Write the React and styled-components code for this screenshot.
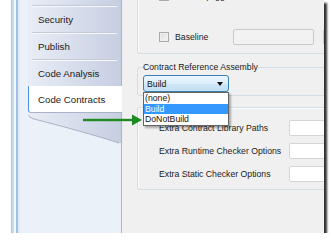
import React from "react";
import styled, { createGlobalStyle } from "styled-components";

const Global = createGlobalStyle`
  html, body { margin: 0; padding: 0; background: #fff; }
  body { font-family: "Liberation Sans", Arial, sans-serif; }
  * { box-sizing: border-box; }
`;

const Window = styled.div`
  position: relative;
  width: 324px;
  height: 233px;
  display: flex;
  overflow: hidden;
  background: #f0f0f0;
  box-shadow: 3px 3px 2px rgba(0, 0, 0, 0.8);
`;

const LeftFrame = styled.div`
  flex: none;
  width: 20px;
  background: linear-gradient(
    to right,
    #ffffff 0 11px,
    #b8c2cf 11px 12px,
    #c4dbf0 12px 14px,
    #f4f8fc 14px 16px,
    #9dc2e5 16px 18px,
    #e4ebf5 18px 20px
  );
`;

const TabPanel = styled.div`
  flex: none;
  width: 102px;
  display: flex;
  flex-direction: column;
  padding-left: 8px;
  background: #ebf1f9;
  border-right: 1px solid #aab5cc;
`;

const TabColumn = styled.div`
  display: flex;
  flex-direction: column;
  padding-top: 5px;
  background: linear-gradient(to right, #e8edf6, #c6cee1);
`;

const Tab = styled.div`
  position: relative;
  height: 27px;
  display: flex;
  align-items: center;
  padding-left: 10px;
  padding-top: 1px;
  font-size: 9.7px;
  color: #1a1a1a;
  white-space: nowrap;
  &::before {
    content: "";
    position: absolute;
    left: 4px;
    right: 4px;
    top: 0;
    height: 2px;
    background: linear-gradient(#c3cadb 50%, #f7f9fc 50%);
    display: ${(p) => (p.$active ? "none" : "block")};
  }
  ${(p) =>
    p.$active &&
    `
    background: #ffffff;
    margin-right: -1px;
    border-left: 1px solid #4b95dc;
    padding-left: 9px;
    border-bottom: 1px solid #a9b2c6;
    border-bottom-left-radius: 3px;
  `}
`;

const Footer = styled.svg`
  display: block;
  width: 93px;
  height: 32px;
  margin-top: -1px;
`;

const Content = styled.div`
  position: relative;
  flex: 1;
  display: flex;
  flex-direction: column;
  padding-left: 15px;
  overflow: hidden;
  font-size: 8.7px;
  color: #1a1a1a;
`;

const GroupBox = styled.div`
  flex: none;
  width: 240px;
  height: ${(p) => p.$h}px;
  margin-top: ${(p) => p.$mt}px;
  border: 1px solid #d3dde4;
  border-radius: 3px;
  box-shadow: inset 1px 1px 0 #fafbfc;
  padding-left: 21px;
  padding-top: ${(p) => p.$pt}px;
  display: flex;
  flex-direction: column;
`;

const Fieldset = styled.fieldset`
  flex: none;
  width: 240px;
  margin: 8px 0 0 0;
  padding: 3px 5px 3px 5px;
  border: 1px solid #d3dde4;
  border-radius: 3px;
  min-width: 0;
`;

const Legend = styled.legend`
  padding: 0;
  font-size: 8.7px;
  line-height: 10px;
  color: #1a1a1a;
`;

const Row = styled.div`
  display: flex;
  align-items: center;
  height: ${(p) => p.$h || 16}px;
  margin-top: ${(p) => p.$mt || 0}px;
  white-space: nowrap;
`;

const CheckCell = styled.div`
  display: flex;
  align-items: center;
  gap: 6px;
  width: ${(p) => p.$w || 74}px;
  flex: none;
`;

const Check = styled.span`
  flex: none;
  width: 10px;
  height: 10px;
  border: 1px solid #a9abad;
  background: linear-gradient(135deg, #dcdcdc, #f6f6f6);
  box-shadow: inset 0 0 0 1px #eeeeee;
`;

const TextBox = styled.div`
  flex: none;
  width: ${(p) => p.$w}px;
  height: 16px;
  border: 1px solid ${(p) => (p.$disabled ? "#c9c9c9" : "#d2d6db")};
  border-radius: 2px;
  background: ${(p) => (p.$disabled ? "#f2f2f2" : "#ffffff")};
  margin-left: ${(p) => p.$ml || 0}px;
`;

const Label = styled.span`
  flex: none;
  width: 130px;
`;

const ComboWrap = styled.div`
  position: relative;
  width: 86px;
`;

const Combo = styled.div`
  height: 17px;
  display: flex;
  align-items: center;
  justify-content: space-between;
  padding: 0 5px 0 3px;
  border: 1px solid #3c7fb1;
  border-radius: 3px;
  background: linear-gradient(#edf6fd, #ddeefa 50%, #cfe7f7 50%, #c2dff3);
  color: #111;
`;

const Caret = styled.span`
  width: 0;
  height: 0;
  border-left: 3.5px solid transparent;
  border-right: 3.5px solid transparent;
  border-top: 4px solid #111;
`;

const DropList = styled.div`
  position: absolute;
  left: 0;
  top: 100%;
  width: 86px;
  border: 1px solid #646464;
  background: #fff;
  box-shadow: 2px 2px 2px rgba(0, 0, 0, 0.3);
  z-index: 2;
`;

const Item = styled.div`
  height: 10.5px;
  line-height: 10.5px;
  padding-left: 1px;
  background: ${(p) => (p.$sel ? "#3399ff" : "#fff")};
  color: ${(p) => (p.$sel ? "#fff" : "#111")};
`;

const Arrow = styled.svg`
  position: absolute;
  left: 83px;
  top: 114px;
  width: 60px;
  height: 12px;
  z-index: 3;
`;

const tabs = ["Security", "Publish", "Code Analysis", "Code Contracts"];

export default function App() {
  return (
    <>
      <Global />
      <Window>
        <LeftFrame />
        <TabPanel>
          <TabColumn>
            {tabs.map((t) => (
              <Tab key={t} $active={t === "Code Contracts"}>
                {t}
              </Tab>
            ))}
          </TabColumn>
          <Footer viewBox="0 0 93 32">
            <defs>
              <linearGradient id="tg" x1="0" x2="1" y1="0" y2="0">
                <stop offset="0" stopColor="#e8edf6" />
                <stop offset="1" stopColor="#c6cee1" />
              </linearGradient>
            </defs>
            <path
              d="M0 0 H93 V31 H91 C70 24 30 13 6 7 Q1 5.5 0.5 3 Z"
              fill="url(#tg)"
            />
            <path
              d="M91 31 C70 24 30 13 6 7 Q1 5.5 0.5 3"
              fill="none"
              stroke="#a9b2c6"
              strokeWidth="1"
            />
          </Footer>
        </TabPanel>
        <Content>
          <GroupBox $mt={-14} $h={68} $pt={3}>
            <Row $h={11}>
              <CheckCell $w={160}>
                <Check />
                <span>Show squiggles</span>
              </CheckCell>
            </Row>
            <Row $mt={28}>
              <CheckCell>
                <Check />
                <span>Baseline</span>
              </CheckCell>
              <TextBox $w={81} $disabled />
              <TextBox $w={20} $ml={9} $disabled />
            </Row>
          </GroupBox>
          <Fieldset>
            <Legend>Contract Reference Assembly</Legend>
            <ComboWrap>
              <Combo>
                <span>Build</span>
                <Caret />
              </Combo>
              <DropList>
                <Item>(none)</Item>
                <Item $sel>Build</Item>
                <Item>DoNotBuild</Item>
              </DropList>
            </ComboWrap>
          </Fieldset>
          <GroupBox $mt={11} $h={83} $pt={12}>
            <Row>
              <Label>Extra Contract Library Paths</Label>
              <TextBox $w={60} />
            </Row>
            <Row $mt={7}>
              <Label>Extra Runtime Checker Options</Label>
              <TextBox $w={60} />
            </Row>
            <Row $mt={7}>
              <Label>Extra Static Checker Options</Label>
              <TextBox $w={60} />
            </Row>
          </GroupBox>
        </Content>
        <Arrow viewBox="0 0 60 12">
          <rect x="0" y="4.8" width="51" height="2.4" fill="#1f8a1f" />
          <polygon points="49,0.5 59,6 49,11.5" fill="#1f8a1f" />
        </Arrow>
      </Window>
    </>
  );
}
